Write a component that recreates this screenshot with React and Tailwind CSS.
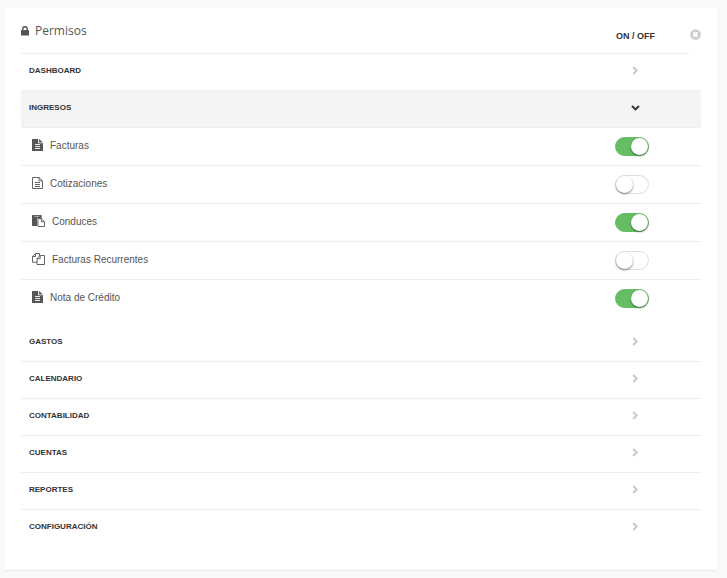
import React, { useState } from 'react';

const SECTIONS = [
  { id: 'dashboard', label: 'DASHBOARD' },
  {
    id: 'ingresos',
    label: 'INGRESOS',
    items: [
      { id: 'facturas', label: 'Facturas', icon: 'fileSolid' },
      { id: 'cotizaciones', label: 'Cotizaciones', icon: 'fileOutline' },
      { id: 'conduces', label: 'Conduces', icon: 'paste' },
      { id: 'recurrentes', label: 'Facturas Recurrentes', icon: 'copy' },
      { id: 'nota', label: 'Nota de Crédito', icon: 'fileSolid' },
    ],
  },
  { id: 'gastos', label: 'GASTOS' },
  { id: 'calendario', label: 'CALENDARIO' },
  { id: 'contabilidad', label: 'CONTABILIDAD' },
  { id: 'cuentas', label: 'CUENTAS' },
  { id: 'reportes', label: 'REPORTES' },
  { id: 'configuracion', label: 'CONFIGURACIÓN' },
];

const LockIcon = () => (
  <svg className="h-[10px] w-2" viewBox="0 0 8 10" aria-hidden="true">
    <path d="M1.8 5V3a2.2 2.2 0 0 1 4.4 0v2" fill="none" stroke="currentColor" strokeWidth="1.4" />
    <rect y="4" width="8" height="5.4" rx="0.5" fill="currentColor" />
  </svg>
);

const CloseIcon = () => (
  <svg className="h-[11px] w-[11px]" viewBox="0 0 11 11" aria-hidden="true">
    <circle cx="5.5" cy="5.5" r="5.3" fill="currentColor" />
    <path d="M3.5 3.5l4 4M7.5 3.5l-4 4" stroke="#fff" strokeWidth="2" />
  </svg>
);

const ChevronIcon = ({ open }) =>
  open ? (
    <svg className="h-[6px] w-[9px]" viewBox="0 0 9 6" aria-hidden="true">
      <path d="M1 1l3.5 3.4L8 1" fill="none" stroke="currentColor" strokeWidth="2" />
    </svg>
  ) : (
    <svg className="h-[10px] w-2" viewBox="0 0 8 10" aria-hidden="true">
      <path d="M2.2 1l3.5 3.5L2.2 8" fill="none" stroke="currentColor" strokeWidth="2.2" />
    </svg>
  );

const ItemIcon = ({ name }) => {
  if (name === 'fileSolid') {
    return (
      <svg className="mb-[2px] h-3 w-[11px]" viewBox="0 0 11 12" aria-hidden="true">
        <path d="M.6 0H6.2V4.2H11V11.4a.6.6 0 0 1-.6.6H.6a.6.6 0 0 1-.6-.6V.6A.6.6 0 0 1 .6 0z" fill="currentColor" />
        <path d="M7.1 0L10.9 3.4H7.1z" fill="currentColor" />
        <path d="M3 5.5h5M3 7.5h5M3 9.5h5" stroke="#fff" strokeWidth="0.9" />
      </svg>
    );
  }
  if (name === 'fileOutline') {
    return (
      <svg className="mb-[2px] h-3 w-[11px]" viewBox="0 0 11 12" aria-hidden="true">
        <g fill="none" stroke="currentColor" strokeWidth="0.9">
          <path d="M0.5 0.5H7L10.5 3.8V11.5H0.5z" />
          <path d="M7 0.5V3.8H10.5M3 5.5h5M3 7.5h5M3 9.5h5" />
        </g>
      </svg>
    );
  }
  if (name === 'paste') {
    return (
      <svg className="mb-[2px] h-3 w-[13px]" viewBox="0 0 13 12" aria-hidden="true">
        <path d="M.5 0h8.6a.5.5 0 0 1 .5.5V3H5.2v8H.5a.5.5 0 0 1-.5-.5V.5A.5.5 0 0 1 .5 0z" fill="currentColor" />
        <path d="M2.5 1.3h4.8" stroke="#ccc" strokeWidth="0.9" />
        <path d="M6 3.5H9.3L12.5 6.7V11.5H6z" fill="#fff" stroke="currentColor" strokeWidth="0.9" />
        <path d="M9.3 3.5V6.7H12.5" fill="none" stroke="currentColor" strokeWidth="0.9" />
      </svg>
    );
  }
  return (
    <svg className="mb-[2px] h-3 w-[13px]" viewBox="0 0 13 12" aria-hidden="true">
      <g fill="none" stroke="currentColor" strokeWidth="0.9">
        <path d="M5 9.2H.5V3.5L3.5.5H7.5V3M3.5.5V3.5H.5" />
        <path d="M8.2 2.5H12.5V11.5H5V5.7zM8.2 2.5V5.7H5" fill="#fff" />
      </g>
    </svg>
  );
};

const Toggle = ({ id, checked, onChange }) => (
  <input
    id={id}
    type="checkbox"
    role="switch"
    checked={checked}
    onChange={onChange}
    className="flex h-[19px] w-[34px] cursor-pointer appearance-none items-center rounded-full border border-[#dfdfdf] bg-white before:h-[17px] before:w-[17px] before:rounded-full before:bg-white before:shadow-[0_1px_2px_rgba(0,0,0,0.5)] checked:justify-end checked:border-[#64bd63] checked:bg-[#64bd63]"
  />
);

const PermissionRow = ({ item, checked, onToggle }) => (
  <li className="flex h-[38px] items-center border-b border-[#eee] last:border-transparent">
    <label htmlFor={item.id} className="flex flex-1 items-center gap-[7px] pb-[2px] pl-[11px] text-[10px] leading-4 text-[#555]">
      <ItemIcon name={item.icon} />
      {item.label}
    </label>
    <div className="flex w-[86px]">
      <Toggle id={item.id} checked={checked} onChange={() => onToggle(item.id)} />
    </div>
  </li>
);

const App = () => {
  const [openId, setOpenId] = useState('ingresos');
  const [enabled, setEnabled] = useState({ facturas: true, conduces: true, nota: true });

  const toggle = (id) => setEnabled((prev) => ({ ...prev, [id]: !prev[id] }));

  return (
    <div className="min-h-screen bg-[#f9f9f9] pt-2 pr-[10px] pb-2 pl-[5px] font-['Liberation_Sans',Arial,sans-serif]">
      <main className="bg-white px-4 pb-[23px] shadow-[0_1px_1px_rgba(0,0,0,0.05)]">
        <header className="flex">
          <div className="flex h-[46px] flex-1 border-b border-[#eee]">
            <h1 className="flex flex-1 items-center gap-[6px] font-['Open_Sans',sans-serif] text-[12px] leading-5 text-[#555]">
              <LockIcon />
              Permisos
            </h1>
            <span className="w-[74px] pt-5 text-[9px] leading-4 font-bold text-[#333]">ON / OFF</span>
          </div>
          <button type="button" aria-label="Cerrar" className="flex h-[46px] w-[11px] cursor-pointer items-center pt-[6px] text-[#ccc]">
            <CloseIcon />
          </button>
        </header>

        {SECTIONS.map((section, index) => {
          const open = section.id === openId;
          const last = index === SECTIONS.length - 1;
          return (
            <section key={section.id}>
              <button
                type="button"
                aria-expanded={open}
                onClick={() => setOpenId(open ? null : section.id)}
                className={`flex h-[37px] w-full cursor-pointer items-center border-b pb-[2px] pl-2 text-left text-[8px] leading-4 font-bold text-[#333] ${
                  last ? 'border-transparent' : 'border-[#eee]'
                } ${open ? 'bg-[#f4f4f4]' : ''}`}
              >
                <span className="flex-1">{section.label}</span>
                <span className={`flex w-[70px] ${open ? 'text-[#333]' : 'text-[#ccc]'}`}>
                  <ChevronIcon open={open} />
                </span>
              </button>
              {open && section.items && (
                <ul className="pb-[7px]">
                  {section.items.map((item) => (
                    <PermissionRow key={item.id} item={item} checked={!!enabled[item.id]} onToggle={toggle} />
                  ))}
                </ul>
              )}
            </section>
          );
        })}
      </main>
    </div>
  );
};

export default App;
